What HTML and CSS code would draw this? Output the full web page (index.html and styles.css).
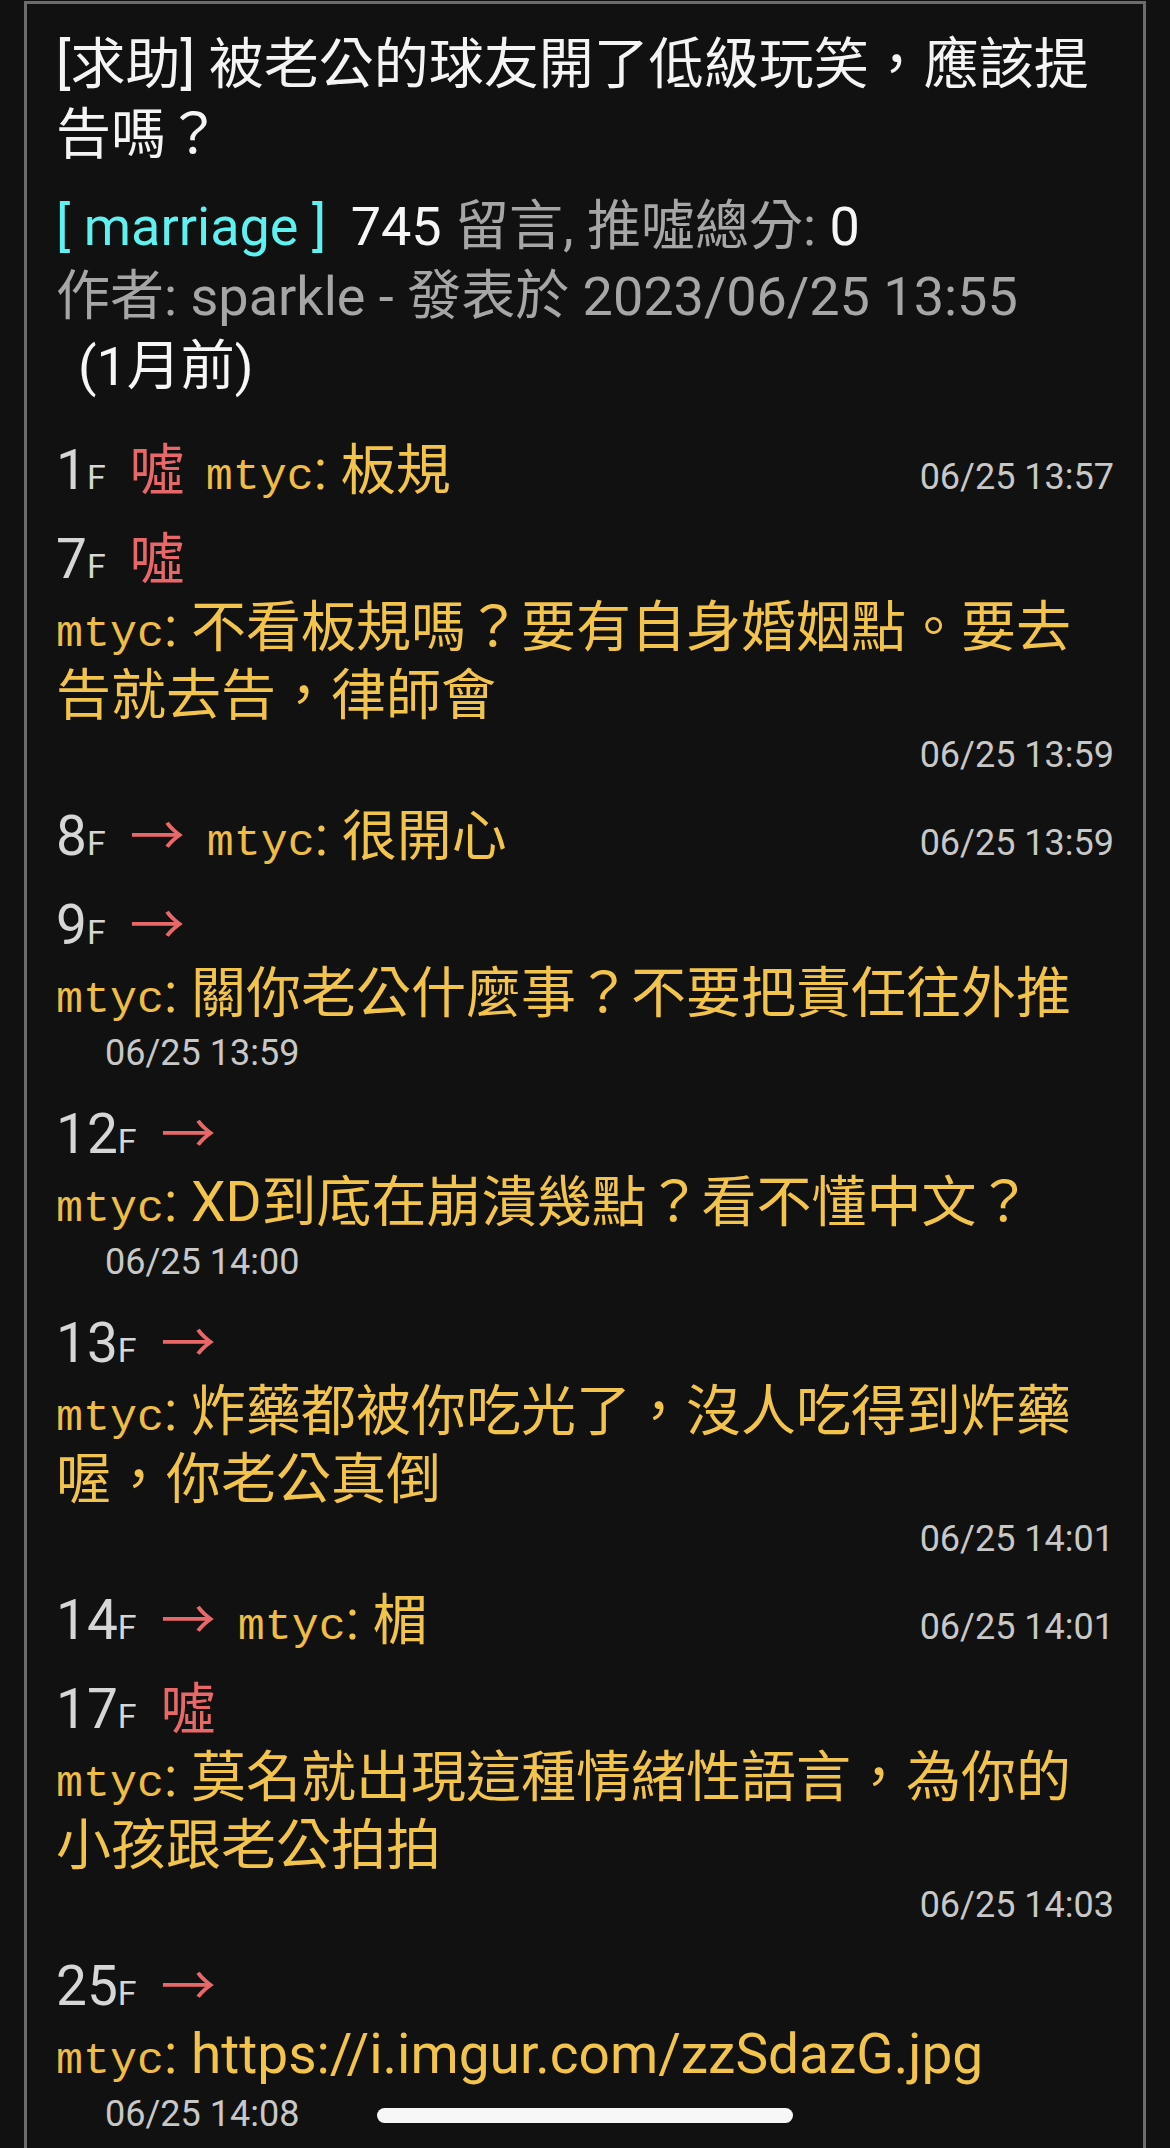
FILE: index.html
```html
<!DOCTYPE html>
<html lang="zh-Hant">
<head>
<meta charset="utf-8">
<title>PTT marriage</title>
<link rel="stylesheet" href="styles.css">
</head>
<body>
<div class="post">
  <h1 class="title">[求助] 被老公的球友開了低級玩笑，應該提告嗎？</h1>
  <div class="meta">
    <div><span class="board">[ marriage ]</span> <span class="hi">745</span> 留言, 推噓總分: <span class="hi">0</span></div>
    <div>作者: sparkle - 發表於 2023/06/25 13:55 <span class="ago">(1月前)</span></div>
  </div>

  <div class="c one">
    <span class="floor">1<small>F</small></span><span class="boo">噓</span><span class="body"><span class="user">mtyc</span>: 板規</span><span class="ts">06/25 13:57</span>
  </div>

  <div class="c">
    <div class="head"><span class="floor">7<small>F</small></span><span class="boo">噓</span></div>
    <div class="body"><span class="user">mtyc</span>: 不看板規嗎？要有自身婚姻點。要去告就去告，律師會</div>
    <div class="ts right">06/25 13:59</div>
  </div>

  <div class="c one">
    <span class="floor">8<small>F</small></span><span class="arrow">→</span><span class="body"><span class="user">mtyc</span>: 很開心</span><span class="ts">06/25 13:59</span>
  </div>

  <div class="c">
    <div class="head"><span class="floor">9<small>F</small></span><span class="arrow">→</span></div>
    <div class="body"><span class="user">mtyc</span>: 關你老公什麼事？不要把責任往外推</div>
    <div class="ts indent">06/25 13:59</div>
  </div>

  <div class="c">
    <div class="head"><span class="floor">12<small>F</small></span><span class="arrow">→</span></div>
    <div class="body"><span class="user">mtyc</span>: XD到底在崩潰幾點？看不懂中文？</div>
    <div class="ts indent">06/25 14:00</div>
  </div>

  <div class="c">
    <div class="head"><span class="floor">13<small>F</small></span><span class="arrow">→</span></div>
    <div class="body"><span class="user">mtyc</span>: 炸藥都被你吃光了，沒人吃得到炸藥喔，你老公真倒</div>
    <div class="ts right">06/25 14:01</div>
  </div>

  <div class="c one">
    <span class="floor">14<small>F</small></span><span class="arrow">→</span><span class="body"><span class="user">mtyc</span>: 楣</span><span class="ts">06/25 14:01</span>
  </div>

  <div class="c">
    <div class="head"><span class="floor">17<small>F</small></span><span class="boo">噓</span></div>
    <div class="body"><span class="user">mtyc</span>: 莫名就出現這種情緒性語言，為你的小孩跟老公拍拍</div>
    <div class="ts right">06/25 14:03</div>
  </div>

  <div class="c">
    <div class="head"><span class="floor">25<small>F</small></span><span class="arrow">→</span></div>
    <div class="body"><span class="user">mtyc</span>: https://i.imgur.com/zzSdazG.jpg</div>
    <div class="ts indent">06/25 14:08</div>
  </div>
</div>
<div class="home-indicator"></div>
</body>
</html>
```

FILE: styles.css
```css
html, body {
  margin: 0;
  padding: 0;
  background: #111111;
}

body {
  font-family: Roboto, "Noto Sans CJK TC", sans-serif;
  color: #f2f2f2;
  min-height: 2148px;
  overflow: hidden;
}

.post {
  box-sizing: border-box;
  width: 1122px;
  min-height: 2200px;
  margin: 1px 0 0 24px;
  border: 3px solid #6c6c6c;
  padding: 25px 29px 0 29px;
  background: #111111;
}

.title {
  margin: 0;
  font-weight: 400;
  font-size: 55px;
  line-height: 70px;
  color: #f4f4f4;
}

.meta {
  margin-top: 23px;
  font-size: 54px;
  line-height: 70px;
  color: #a6a6a6;
}

.board {
  color: #5ff0f0;
  margin-right: 11px;
}

.hi {
  color: #f6f6f6;
}

.ago {
  display: inline-block;
  margin-left: 22px;
  color: #f6f6f6;
}

.meta + .c {
  margin-top: 34px;
}

.c {
  font-size: 55px;
  line-height: 68px;
  margin-bottom: 21px;
  color: #f3c44c;
}

.c.one {
  display: flex;
  align-items: baseline;
}

.floor {
  color: #d6d6d6;
  margin-right: 24px;
}

.floor small {
  font-size: 34px;
  line-height: 1;
}

.boo {
  color: #e8686a;
  margin-right: 21px;
}

.arrow {
  font-family: "Noto Sans CJK TC", sans-serif;
  line-height: 1;
  color: #e8686a;
  margin-right: 22px;
}

.user {
  font-family: "Liberation Mono", monospace;
  font-size: 45px;
  line-height: 1;
  color: #eebd45;
}

.ts {
  font-size: 36px;
  line-height: 52px;
  color: #c8c8c8;
}

.c.one .ts {
  margin-left: auto;
  line-height: 1;
}

.ts.right {
  text-align: right;
}

.ts.indent {
  padding-left: 49px;
}

.home-indicator {
  position: fixed;
  left: 377px;
  top: 2108px;
  width: 416px;
  height: 15px;
  border-radius: 8px;
  background: #f7f7f7;
}
```
